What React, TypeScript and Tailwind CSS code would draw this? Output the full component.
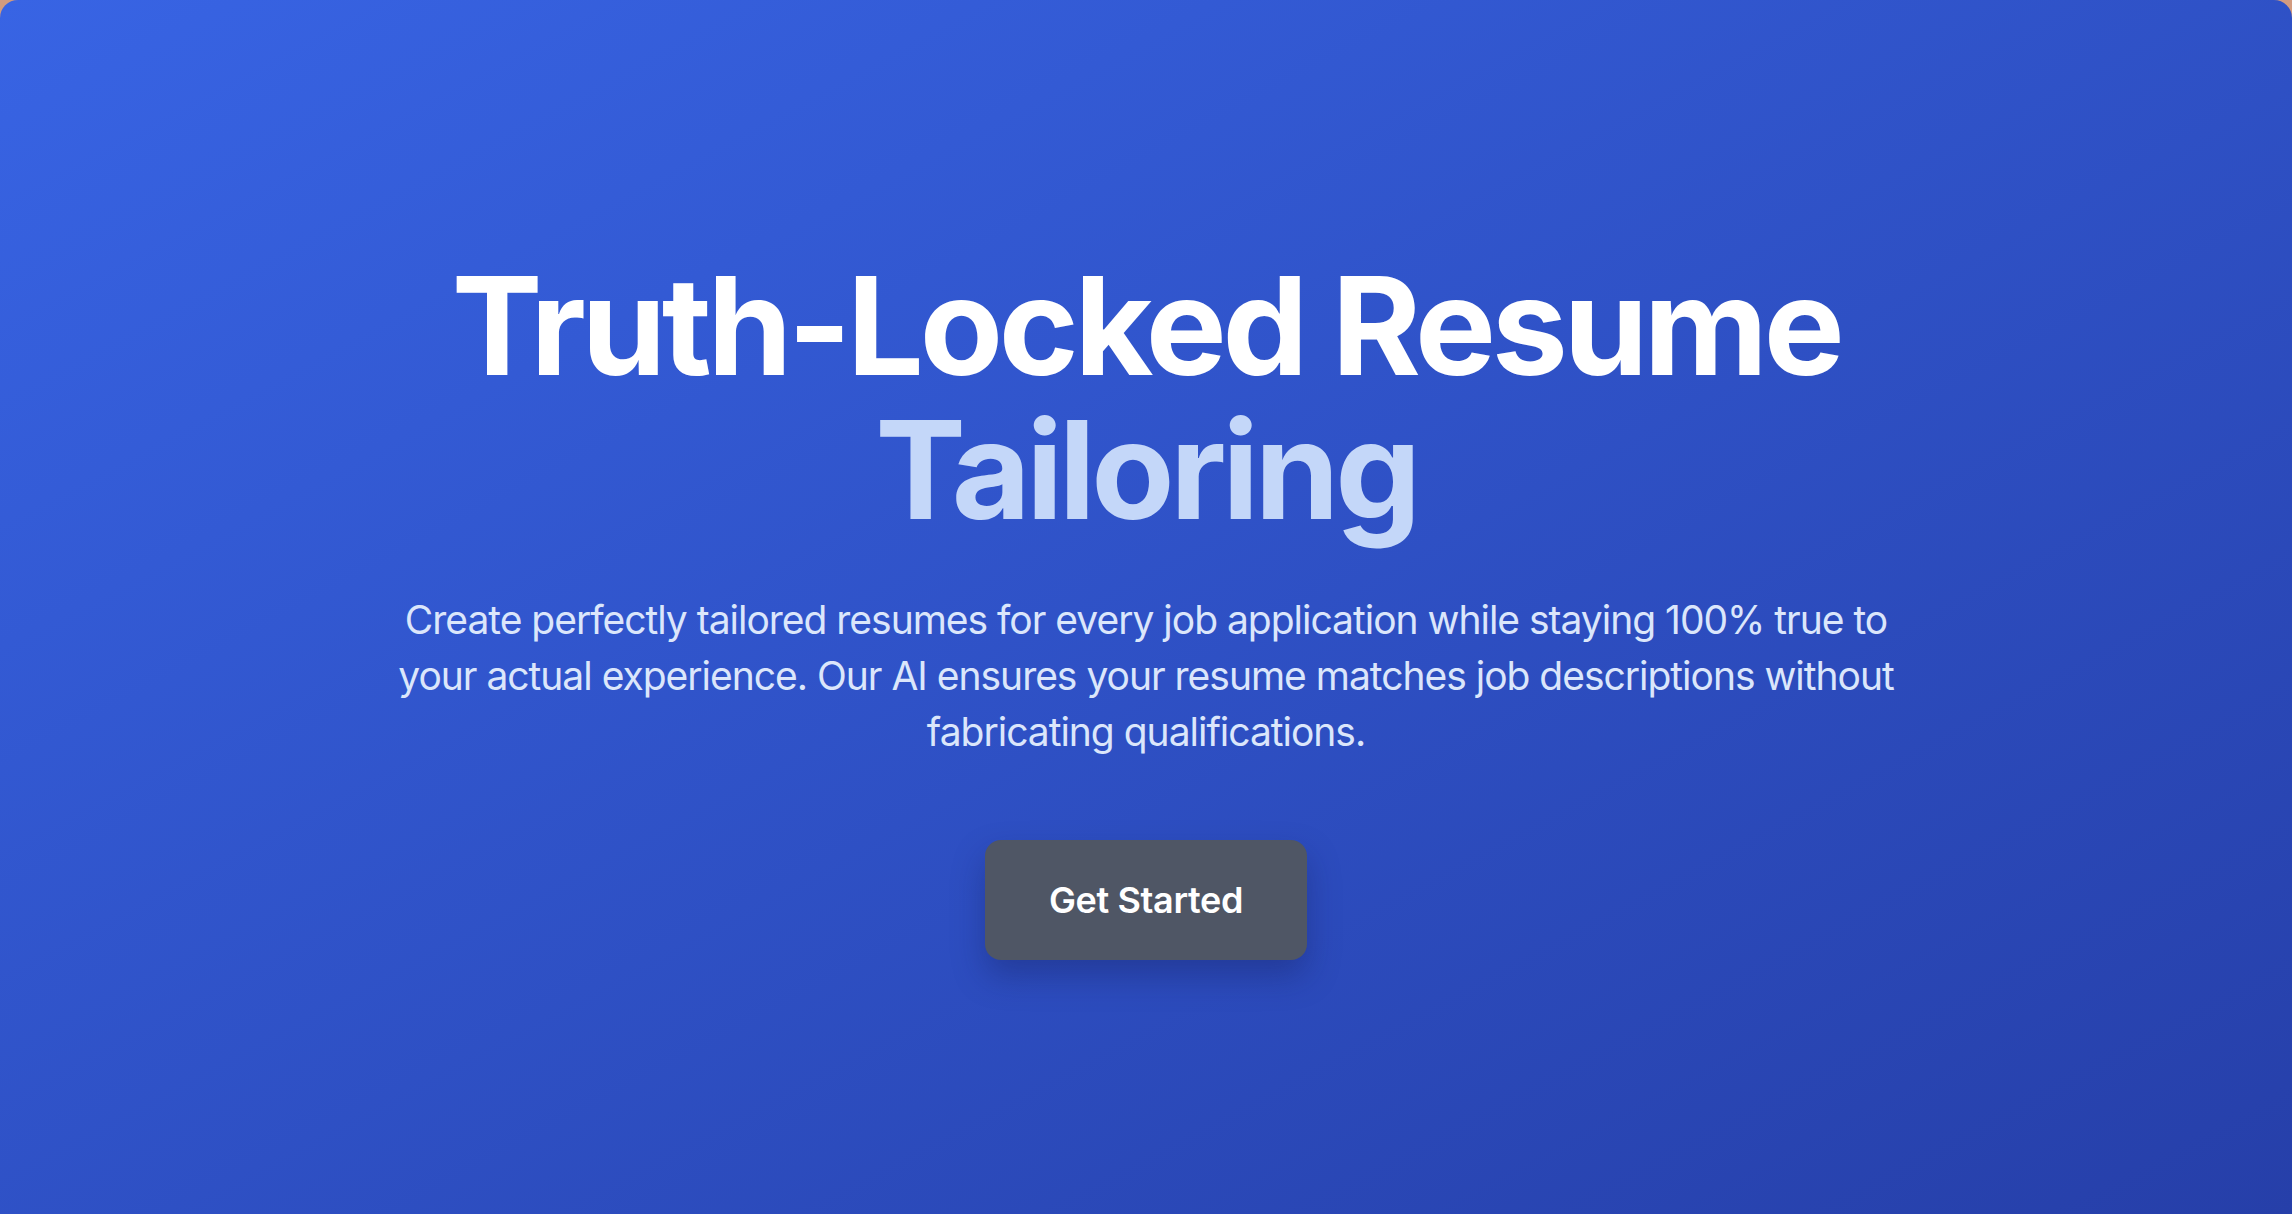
import React from "react";

function Hero() {
  return (
    <section className="flex min-h-screen items-center justify-center rounded-t-[18px] bg-gradient-to-br from-[#3864e4] to-[#263fa9] px-16">
      <div className="flex flex-col items-center text-center">
        <h1 className="mb-[50px] text-[136px] font-bold leading-[144px] tracking-[-0.032em] text-white">
          Truth-Locked Resume
          <br />
          <span className="text-[#c4d7f9]">Tailoring</span>
        </h1>
        <p className="mb-20 max-w-[1520px] text-[39px] leading-[56px] tracking-[-0.026em] text-[#dbe6fb]">
          Create perfectly tailored resumes for every job application while staying 100% true to
          your actual experience. Our AI ensures your resume matches job descriptions without
          fabricating qualifications.
        </p>
        <button
          type="button"
          className="h-[120px] rounded-2xl bg-[#4f5665] px-16 text-[36px] font-semibold tracking-[-0.01em] text-white shadow-[0_16px_32px_rgba(20,30,90,0.35)]"
        >
          Get Started
        </button>
      </div>
    </section>
  );
}

export default function App() {
  return (
    <div className="bg-[#d29b7f] font-['Inter','Noto_Sans',sans-serif]">
      <Hero />
    </div>
  );
}
